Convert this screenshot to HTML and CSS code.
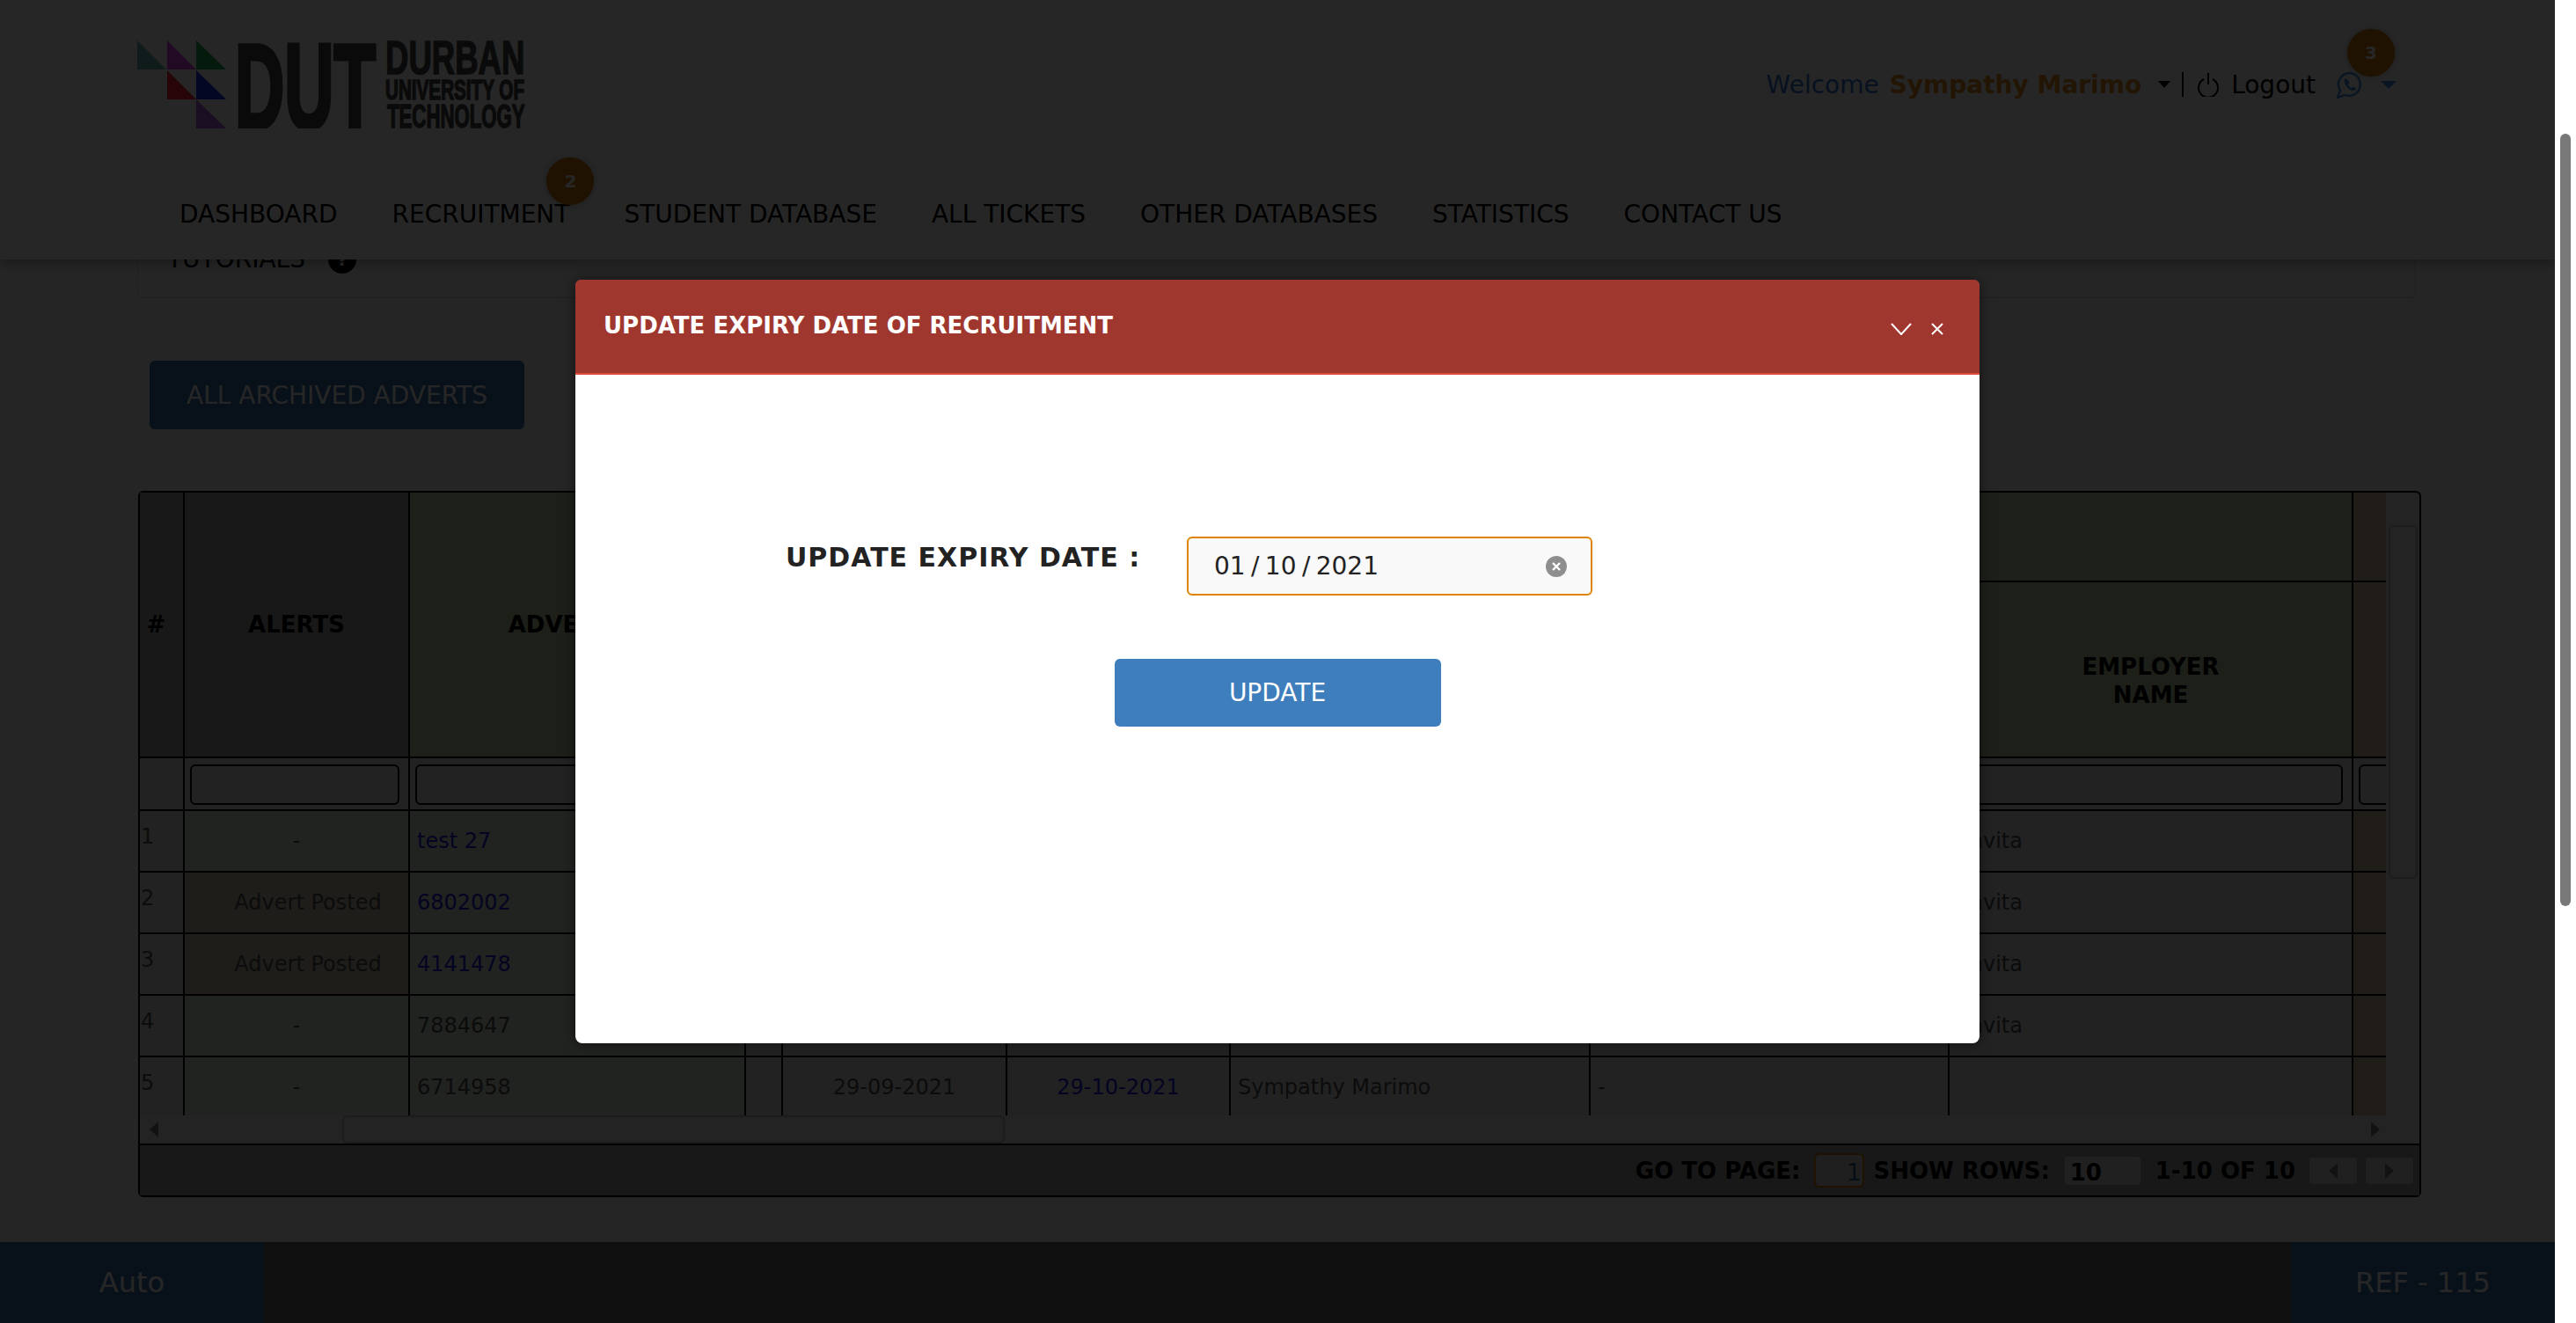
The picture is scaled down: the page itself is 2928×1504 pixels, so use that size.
FILE: index.html
```html
<!DOCTYPE html>
<html lang="en">

<head>
    <meta charset="UTF-8">
    <title>Update Expiry Date</title>
    <link rel="stylesheet" href="styles.css">
</head>

<body>
    <div class="viewport">
        <!-- Header -->
        <header class="site-header">
            <div class="top-bar">
                <svg class="logo" width="442" height="100" viewBox="0 0 442 100">
                    <polygon points="0,0 33,33 0,33" fill="#6fb8b8" />
                    <polygon points="34,0 67,33 34,33" fill="#e040f0" />
                    <polygon points="67,0 101,33 67,33" fill="#1fb050" />
                    <polygon points="34,34 67,67 34,67" fill="#ff2030" />
                    <polygon points="67,34 101,67 67,67" fill="#1830f0" />
                    <polygon points="67,67 101,100 67,100" fill="#b060e0" />
                    <text class="logo-big" transform="translate(111 100) scale(.565 1)" font-size="138">DUT</text>
                    <text class="logo-mid" transform="translate(282 38) scale(.69 1)" font-size="53">DURBAN</text>
                    <text class="logo-mid" transform="translate(282 67) scale(.646 1)" font-size="32">UNIVERSITY OF</text>
                    <text class="logo-mid" transform="translate(284 99) scale(.6 1)" font-size="37">TECHNOLOGY</text>
                </svg>
                <div class="user-menu">
                    <span class="welcome">Welcome</span>
                    <b class="user-name">Sympathy Marimo</b>
                    <span class="caret"></span>
                    <span class="divider"></span>
                    <svg class="power" width="24" height="28" viewBox="0 0 24 28">
                        <path d="M7 8a11 11 0 1 0 10 0" fill="none" stroke="#000" stroke-width="2" />
                        <path d="M12 1v13" stroke="#000" stroke-width="2" />
                    </svg>
                    <span class="logout">Logout</span>
                    <span class="whatsapp">
                        <span class="badge badge-top">3</span>
                        <svg width="32" height="33" viewBox="0 0 32 33">
                            <path d="M16 3a13 13 0 0 0-11 20l-3 8 8-3a13 13 0 1 0 6-25z" fill="none" stroke="#3f90e0" stroke-width="2.400" />
                            <path d="M11 9c-1.500 1-2 3-.5 6.500s5 7 8.500 7.500c2 .3 3.500-1 4-2.500l-3.500-2-1.500 1.500c-1.500-.5-3.500-2.500-4-4l1.500-1.500-2-4c-.7-.7-1.500-.8-2.500-.5z" fill="#3f90e0" />
                        </svg>
                    </span>
                    <span class="caret caret-blue"></span>
                </div>
            </div>
            <nav class="main-nav">
                <a href="#">DASHBOARD</a>
                <a href="#" class="has-badge">RECRUITMENT<span class="badge badge-nav">2</span></a>
                <a href="#">STUDENT DATABASE</a>
                <a href="#">ALL TICKETS</a>
                <a href="#">OTHER DATABASES</a>
                <a href="#">STATISTICS</a>
                <a href="#">CONTACT US</a>
            </nav>
        </header>

        <!-- Page content, scrolled under the header -->
        <main class="content">
            <div class="tutorials">
                <span>TUTORIALS</span>
                <span class="help">?</span>
                <span class="tutorials-arrow"></span>
            </div>

            <button class="archive-btn">ALL ARCHIVED ADVERTS</button>

            <div class="grid">
                <div class="grid-main">
                    <div class="grid-scroll">
                        <table class="grid-table">
                            <colgroup>
                                <col class="c1">
                                <col class="c2">
                                <col class="c3">
                                <col class="c4">
                                <col class="c5">
                                <col class="c6">
                                <col class="c7">
                                <col class="c8">
                                <col class="c9">
                                <col class="c10">
                            </colgroup>
                            <thead>
                                <tr class="head-one">
                                    <th rowspan="2" class="grey hash">#</th>
                                    <th rowspan="2" class="grey">ALERTS</th>
                                    <th rowspan="2" class="green">ADVERT ID</th>
                                    <th colspan="6" class="green"></th>
                                    <th class="brown"></th>
                                </tr>
                                <tr class="head-two">
                                    <th class="green"></th>
                                    <th class="green"></th>
                                    <th class="green"></th>
                                    <th class="green"></th>
                                    <th class="green"></th>
                                    <th class="green employer">EMPLOYER<br>NAME</th>
                                    <th class="brown"></th>
                                </tr>
                                <tr class="filters">
                                    <td></td>
                                    <td><input type="text"></td>
                                    <td><input type="text"></td>
                                    <td></td>
                                    <td><input type="text"></td>
                                    <td><input type="text"></td>
                                    <td><input type="text"></td>
                                    <td><input type="text"></td>
                                    <td><input type="text"></td>
                                    <td><input type="text"></td>
                                </tr>
                            </thead>
                            <tbody>
                                <tr>
                                    <td class="num">1</td>
                                    <td class="tint center">-</td>
                                    <td class="tint"><a href="#">test 27</a></td>
                                    <td></td>
                                    <td class="center">29-09-2021</td>
                                    <td class="center"><a href="#">29-10-2021</a></td>
                                    <td>Sympathy Marimo</td>
                                    <td>-</td>
                                    <td>Savita</td>
                                    <td class="brown"></td>
                                </tr>
                                <tr>
                                    <td class="num">2</td>
                                    <td class="posted center"><span>Advert Posted</span></td>
                                    <td class="tint"><a href="#">6802002</a></td>
                                    <td></td>
                                    <td class="center">29-09-2021</td>
                                    <td class="center"><a href="#">29-10-2021</a></td>
                                    <td>Sympathy Marimo</td>
                                    <td>-</td>
                                    <td>Savita</td>
                                    <td class="brown"></td>
                                </tr>
                                <tr>
                                    <td class="num">3</td>
                                    <td class="posted center"><span>Advert Posted</span></td>
                                    <td class="tint"><a href="#">4141478</a></td>
                                    <td></td>
                                    <td class="center">29-09-2021</td>
                                    <td class="center"><a href="#">29-10-2021</a></td>
                                    <td>Sympathy Marimo</td>
                                    <td>-</td>
                                    <td>Savita</td>
                                    <td class="brown"></td>
                                </tr>
                                <tr>
                                    <td class="num">4</td>
                                    <td class="tint center">-</td>
                                    <td class="tint">7884647</td>
                                    <td></td>
                                    <td class="center">29-09-2021</td>
                                    <td class="center"><a href="#">29-10-2021</a></td>
                                    <td>Sympathy Marimo</td>
                                    <td>-</td>
                                    <td>Savita</td>
                                    <td class="brown"></td>
                                </tr>
                                <tr>
                                    <td class="num">5</td>
                                    <td class="tint center">-</td>
                                    <td class="tint">6714958</td>
                                    <td></td>
                                    <td class="center">29-09-2021</td>
                                    <td class="center"><a href="#">29-10-2021</a></td>
                                    <td>Sympathy Marimo</td>
                                    <td>-</td>
                                    <td></td>
                                    <td class="brown"></td>
                                </tr>
                            </tbody>
                        </table>
                    </div>
                    <div class="vscroll"><div class="vthumb"></div></div>
                </div>
                <div class="hscroll">
                    <span class="arrow-left"></span>
                    <div class="hthumb"></div>
                    <span class="arrow-right"></span>
                </div>
                <div class="grid-foot">
                    <b>GO TO PAGE:</b>
                    <span class="page-input">1</span>
                    <b>SHOW ROWS:</b>
                    <span class="rows-select">10</span>
                    <b class="range">1-10 OF 10</b>
                    <span class="page-btn"><span class="arrow-left"></span></span>
                    <span class="page-btn"><span class="arrow-right"></span></span>
                </div>
            </div>
        </main>

        <!-- Bottom Bar -->
        <footer class="bottom-bar">
            <span class="bar-cell">Auto</span>
            <span class="bar-cell">REF - 115</span>
        </footer>

        <!-- Modal -->
        <div class="overlay">
            <div class="modal">
                <div class="modal-head">
                    <h2>UPDATE EXPIRY DATE OF RECRUITMENT</h2>
                    <svg width="24" height="14" viewBox="0 0 24 14">
                        <path d="M1 1l11 12L23 1" fill="none" stroke="#fff" stroke-width="2" />
                    </svg>
                    <svg class="modal-close" width="14" height="14" viewBox="0 0 14 14">
                        <path d="M1 1l12 12M13 1L1 13" fill="none" stroke="#fff" stroke-width="2" />
                    </svg>
                </div>
                <div class="modal-body">
                    <div class="date-row">
                        <label>UPDATE EXPIRY DATE :</label>
                        <div class="date-field">
                            <span>01 / 10 / 2021</span>
                            <svg width="24" height="24" viewBox="0 0 24 24">
                                <circle cx="12" cy="12" r="12" fill="#8e8e8e" />
                                <path d="M8 8l8 8M16 8l-8 8" stroke="#fff" stroke-width="2.400" />
                            </svg>
                        </div>
                    </div>
                    <button class="update-btn">UPDATE</button>
                </div>
            </div>
        </div>
    </div>

    <!-- Page scrollbar -->
    <div class="page-scroll"><div class="page-thumb"></div></div>
</body>

</html>
```

FILE: styles.css
```css
/* General Styling */
body {
    margin: 0;
    height: 100vh;
    display: flex;
    overflow: hidden;
    font-family: "DejaVu Sans", sans-serif;
    font-size: 24px;
    color: #333;
    background: #fff;
}

.viewport {
    position: relative;
    flex: 1;
    min-width: 0;
    display: flex;
    flex-direction: column;
    overflow: hidden;
    background: #f6f6f6;
}

/* Page scrollbar */
.page-scroll {
    width: 24px;
    flex: none;
    padding: 152px 6px 0;
    box-sizing: border-box;
}

.page-thumb {
    width: 12px;
    height: 878px;
    border-radius: 6px;
    background: #787878;
}

/* Header */
.site-header {
    position: relative;
    z-index: 2;
    flex: none;
    background: #fdfdfd;
    box-shadow: 0 4px 12px rgba(0, 0, 0, 0.3);
}

.top-bar {
    height: 144px;
    display: flex;
    justify-content: space-between;
    align-items: flex-start;
    padding: 46px 180px 0 156px;
    border-bottom: 1px solid #eee;
}

.logo {
    font-family: "Liberation Sans", sans-serif;
    font-weight: bold;
    fill: #444;
}

.logo-big {
    stroke: #444;
    stroke-width: 5px;
}

.logo-mid {
    stroke: #444;
    stroke-width: 1.5px;
}

.user-menu {
    display: flex;
    align-items: center;
    height: 40px;
    margin-top: 30px;
    font-size: 28px;
    color: #000;
}

.welcome {
    color: #3070d0;
    margin-right: 12px;
}

.user-name {
    color: #e08a1e;
    font-weight: bold;
    margin-right: 19px;
}

.caret {
    width: 0;
    height: 0;
    border-left: 7px solid transparent;
    border-right: 7px solid transparent;
    border-top: 8px solid #000;
    margin-right: 13px;
}

.caret-blue {
    border-left-width: 9px;
    border-right-width: 9px;
    border-top: 9px solid #3f90e0;
    margin: 0 0 0 19px;
}

.divider {
    width: 2px;
    height: 28px;
    background: #000;
    margin-right: 16px;
}

.power {
    margin-right: 14px;
}

.logout {
    margin-right: 23px;
}

.whatsapp {
    position: relative;
    display: flex;
}

.badge {
    position: absolute;
    width: 54px;
    height: 54px;
    border-radius: 50%;
    background: #d87800;
    color: #fff;
    font-size: 20px;
    font-weight: bold;
    display: flex;
    align-items: center;
    justify-content: center;
    box-shadow: 0 0 6px rgba(0, 0, 0, 0.3);
}

.badge-top {
    left: 13px;
    top: -47px;
}

.main-nav {
    height: 104px;
    display: flex;
    align-items: center;
    gap: 62px;
    padding-left: 204px;
    background: #fbfbfb;
}

.main-nav a {
    color: #000;
    font-size: 28px;
    text-decoration: none;
}

.has-badge {
    position: relative;
}

.badge-nav {
    left: 176px;
    top: -48px;
}

/* Main Content Styling */
.content {
    flex: 1;
    min-height: 0;
    margin-top: -45px;
    padding: 0 0 0 156px;
    display: flex;
    flex-direction: column;
    align-items: flex-start;
}

.tutorials {
    width: 2590px;
    height: 89px;
    box-sizing: border-box;
    display: flex;
    align-items: flex-end;
    padding: 0 0 27px 33px;
    border: 1px solid #ccc;
    border-radius: 6px;
    color: #000;
    font-size: 28px;
    position: relative;
}

.help {
    width: 32px;
    height: 32px;
    margin-left: 26px;
    border-radius: 50%;
    background: #000;
    color: #fff;
    font-size: 20px;
    font-weight: bold;
    display: flex;
    align-items: center;
    justify-content: center;
}

.tutorials-arrow {
    position: absolute;
    right: 52px;
    top: 38px;
    border-left: 5px solid transparent;
    border-right: 5px solid transparent;
    border-top: 6px solid #000;
}

.archive-btn {
    margin: 71px 0 0 14px;
    width: 426px;
    height: 78px;
    border: 0;
    border-radius: 6px;
    background: #3972ab;
    color: #fff;
    font-family: inherit;
    font-size: 28px;
}

/* Grid */
.grid {
    width: 2595px;
    margin: 70px 0 0 1px;
    box-sizing: border-box;
    border: 2px solid #000;
    border-radius: 6px;
    background: #ebebeb;
}

.grid-main {
    display: flex;
    height: 708px;
}

.grid-scroll {
    width: 2553px;
    overflow: hidden;
}

.grid-table {
    table-layout: fixed;
    width: 2636px;
    border-collapse: separate;
    border-spacing: 0;
    background: #e4e4e4;
}

.c1 { width: 51px; }
.c2 { width: 256px; }
.c3 { width: 382px; }
.c4 { width: 42px; }
.c5 { width: 255px; }
.c6 { width: 254px; }
.c7 { width: 409px; }
.c8 { width: 408px; }
.c9 { width: 459px; }
.c10 { width: 120px; }

.grid-table th,
.grid-table td {
    box-sizing: border-box;
    padding: 0 0 0 8px;
    border-right: 2px solid #000;
    border-bottom: 2px solid #000;
    overflow: hidden;
    white-space: nowrap;
}

.grid-table th {
    padding: 0;
    color: #000;
    font-size: 26px;
    line-height: 32px;
    font-weight: bold;
    text-align: center;
}

.head-one {
    height: 102px;
}

.head-two {
    height: 200px;
}

.grid-table .hash {
    padding-right: 12px;
}

.grid-table .employer {
    padding-top: 26px;
}

.grey {
    background: #a0a0a0;
}

.green {
    background: #c4cfaa;
}

.grid-table .brown {
    background: #d8c0a4;
}

.filters {
    height: 60px;
}

.grid-table .filters td {
    padding: 0 10px 0 6px;
}

.filters input {
    display: block;
    width: 100%;
    height: 46px;
    box-sizing: border-box;
    margin-top: 6px;
    margin-bottom: 4px;
    border: 2px solid #000;
    border-radius: 6px;
    background: #e0e0e0;
}

tbody tr {
    height: 70px;
}

tbody td {
    color: #505050;
    font-size: 24px;
}

.grid-table .num {
    padding: 0 0 10px 1px;
    font-size: 24px;
}

.grid-table .center {
    padding: 0;
    text-align: center;
}

.tint {
    background: #dce9d6;
}

.posted {
    background: #cfc2ae;
}

.posted span {
    padding-left: 26px;
}

tbody a {
    color: #1c1ce0;
    text-decoration: none;
}

/* Grid scrollbars */
.vscroll {
    width: 38px;
    padding: 37px 0 0 3px;
    box-sizing: border-box;
}

.vthumb,
.hthumb {
    box-sizing: border-box;
    border: 2px solid #b8b8b8;
    border-radius: 6px;
    background: #e6e6e6;
}

.vthumb {
    width: 33px;
    height: 402px;
}

.hscroll {
    height: 32px;
    display: flex;
    align-items: center;
    padding: 0 45px 0 11px;
}

.hthumb {
    width: 753px;
    height: 32px;
    margin-left: 209px;
    margin-right: auto;
}

.arrow-left {
    width: 0;
    height: 0;
    border-top: 9px solid transparent;
    border-bottom: 9px solid transparent;
    border-right: 10px solid #777;
}

.arrow-right {
    width: 0;
    height: 0;
    border-top: 9px solid transparent;
    border-bottom: 9px solid transparent;
    border-left: 10px solid #777;
}

.grid-foot {
    height: 57px;
    display: flex;
    justify-content: flex-end;
    align-items: center;
    padding-right: 7px;
    border-top: 2px solid #000;
    background: #a0a0a0;
    color: #000;
    font-size: 26px;
}

.page-input {
    width: 57px;
    height: 39px;
    box-sizing: border-box;
    margin: 0 11px 0 15px;
    padding-right: 1px;
    border: 2px solid #d07a00;
    border-radius: 6px;
    background: #cfcfcf;
    color: #2a5c90;
    text-align: right;
    line-height: 40px;
}

.rows-select {
    width: 86px;
    height: 32px;
    box-sizing: border-box;
    margin: 0 17px;
    padding-left: 6px;
    border-radius: 3px;
    background: #d5d5d5;
    font-weight: bold;
    line-height: 36px;
}

.range {
    margin-right: 16px;
}

.page-btn {
    width: 54px;
    height: 30px;
    margin-left: 10px;
    border-radius: 3px;
    background: #d5d5d5;
    display: flex;
    align-items: center;
    justify-content: center;
}

.range + .page-btn {
    margin-left: 0;
}

/* Bottom Bar */
.bottom-bar {
    flex: none;
    height: 92px;
    display: flex;
    justify-content: space-between;
    background: #666;
}

.bar-cell {
    width: 300px;
    display: flex;
    align-items: center;
    justify-content: center;
    background: #3972ab;
    color: #fff;
    font-size: 32px;
}

/* Modal */
.overlay {
    position: absolute;
    inset: 0;
    z-index: 5;
    display: flex;
    justify-content: center;
    align-items: flex-start;
    padding-top: 318px;
    background: rgba(0, 0, 0, 0.85);
}

.modal {
    width: 1596px;
    height: 868px;
    display: flex;
    flex-direction: column;
    border-radius: 8px;
    background: #fff;
    box-shadow: 0 0 14px rgba(0, 0, 0, 0.5);
}

.modal-head {
    height: 106px;
    flex: none;
    display: flex;
    align-items: center;
    padding: 0 41px 0 32px;
    border-bottom: 2px solid #dd4b39;
    border-radius: 6px 6px 0 0;
    background: #9f372e;
}

.modal-head h2 {
    flex: 1;
    margin: 0 0 2px;
    color: #fff;
    font-size: 26px;
    font-weight: bold;
}

.modal-head svg {
    margin-top: 6px;
}

.modal-close {
    margin-left: 22px;
}

.modal-body {
    flex: 1;
    display: flex;
    flex-direction: column;
    align-items: center;
}

.date-row {
    align-self: flex-start;
    display: flex;
    margin: 184px 0 0 239px;
}

.date-row label {
    width: 456px;
    padding-top: 6px;
    color: #222;
    font-size: 30px;
    font-weight: bold;
    letter-spacing: 1px;
}

.date-field {
    width: 461px;
    height: 67px;
    box-sizing: border-box;
    display: flex;
    align-items: center;
    justify-content: space-between;
    padding: 0 27px 0 29px;
    border: 2px solid #e08300;
    border-radius: 6px;
    background: #f9f9f9;
    color: #222;
    font-size: 28px;
    word-spacing: -2.5px;
}

.update-btn {
    margin-top: 72px;
    width: 371px;
    height: 77px;
    border: 0;
    border-radius: 6px;
    background: #3e7ebc;
    color: #fff;
    font-family: inherit;
    font-size: 28px;
}
```
